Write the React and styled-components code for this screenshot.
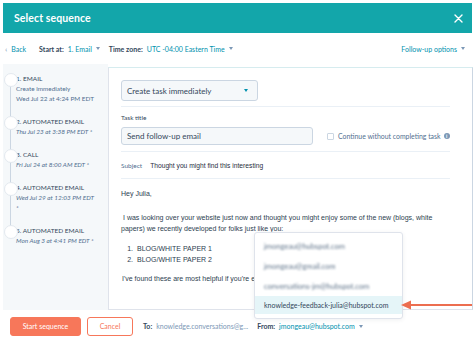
import React from 'react';
import styled, { createGlobalStyle } from 'styled-components';

const UI = `"Lato", "Noto Sans", sans-serif`;
const MAIL = `"Liberation Sans", Arial, sans-serif`;

const Global = createGlobalStyle`
  html, body { margin: 0; padding: 0; background: #fff; }
  #root { width: 474px; height: 343px; overflow: hidden; }
  * { box-sizing: border-box; }
`;

const Frame = styled.div`
  position: relative;
  width: 474px;
  height: 343px;
  padding: 3px 2px 0 3px;
  display: flex;
  flex-direction: column;
  font-family: ${UI};
  color: #33475b;
`;

const Header = styled.div`
  flex: 0 0 30px;
  background: #13a6aa;
  display: flex;
  align-items: center;
  justify-content: space-between;
  padding: 0 9px 0 11px;
`;

const Title = styled.div`
  color: #fff;
  font-size: 10.5px;
  font-weight: 700;
  letter-spacing: 0.1px;
`;

const Toolbar = styled.div`
  flex: 0 0 31px;
  display: flex;
  align-items: center;
  padding: 0 7px 0 2px;
  font-size: 7px;
  white-space: nowrap;
`;

const ToolGroup = styled.div`
  display: flex;
  align-items: center;
  margin-left: ${(p) => p.$ml || 0}px;
`;

const Label = styled.span`
  font-weight: 700;
  color: #33475b;
  margin-right: 4px;
`;

const Link = styled.span`
  color: #0091ae;
`;

const Chevron = styled.span`
  color: #7c98b6;
  margin-right: 4px;
  font-size: 8px;
`;

const Caret = styled.span`
  display: inline-block;
  width: 0;
  height: 0;
  border-left: 2.5px solid transparent;
  border-right: 2.5px solid transparent;
  border-top: 3px solid ${(p) => p.$color || '#7c98b6'};
  margin-left: ${(p) => p.$ml ?? 4}px;
`;

const Spacer = styled.div`
  flex: 1;
`;

const Main = styled.div`
  flex: 0 0 246px;
  display: flex;
`;

const Sidebar = styled.div`
  flex: 0 0 105px;
  background: #f5f8fa;
  padding: 10px 0 0 13px;
`;

const StepList = styled.div`
  position: relative;
  display: flex;
  flex-direction: column;
  gap: 13px;
  &::before {
    content: '';
    position: absolute;
    left: -6.5px;
    top: 5px;
    bottom: 15px;
    width: 1px;
    background: #cbd6e2;
  }
`;

const Step = styled.div`
  position: relative;
  line-height: 10px;
  font-size: 6.4px;
  &::before {
    content: '';
    position: absolute;
    left: -12.5px;
    top: -1px;
    width: 12px;
    height: 12px;
    border-radius: 50%;
    background: #fff;
    border: 1px solid #e3e9ef;
  }
`;

const StepTitle = styled.div`
  color: #33475b;
  font-size: 6.5px;
  text-transform: uppercase;
`;

const StepSub = styled.div`
  color: #516f90;
  font-style: ${(p) => (p.$italic ? 'italic' : 'normal')};
  white-space: nowrap;
`;

const Panel = styled.div`
  flex: 1;
  margin: 3px 6px 0 0;
  border: 1px solid #dfe3eb;
  border-top-color: #d6ecef;
  border-right-color: #cbd6e2;
  padding: 12px 22px 0 12px;
  display: flex;
  flex-direction: column;
`;

const SelectBox = styled.div`
  width: 137px;
  height: 21px;
  background: #f5f8fa;
  border: 1px solid #cbd6e2;
  border-radius: 3px;
  display: flex;
  align-items: center;
  justify-content: space-between;
  padding: 0 9px 0 5px;
  font-size: 8px;
  color: #33475b;
`;

const Divider = styled.div`
  height: 1px;
  background: #eaf0f6;
  margin-top: ${(p) => p.$mt || 0}px;
`;

const FieldLabel = styled.div`
  font-size: 6.5px;
  line-height: 8px;
  margin-top: 7px;
  color: #33475b;
`;

const FieldRow = styled.div`
  display: flex;
  align-items: center;
  margin-top: 5px;
`;

const Input = styled.div`
  width: 192px;
  height: 18px;
  background: #f5f8fa;
  border: 1px solid #cbd6e2;
  border-radius: 3px;
  display: flex;
  align-items: center;
  padding-left: 5px;
  font-size: 8px;
  color: #33475b;
`;

const Check = styled.span`
  width: 7px;
  height: 7px;
  border: 1px solid #cbd6e2;
  border-radius: 1px;
  background: #fff;
  margin-left: 14px;
  flex: 0 0 auto;
`;

const CheckText = styled.span`
  font-size: 6.9px;
  color: #516f90;
  margin-left: 4px;
  white-space: nowrap;
`;

const Info = styled.span`
  display: inline-flex;
  align-items: center;
  justify-content: center;
  width: 6px;
  height: 6px;
  border-radius: 50%;
  background: #7c98b6;
  color: #fff;
  font-size: 4.5px;
  font-weight: 700;
  margin-left: 3px;
  font-family: ${MAIL};
`;

const SubjectRow = styled.div`
  height: 26px;
  display: flex;
  align-items: center;
`;

const SubjectLabel = styled.span`
  font-size: 6.5px;
  color: #516f90;
`;

const SubjectValue = styled.span`
  font-family: ${MAIL};
  font-size: 6.7px;
  color: #1f2d3d;
  margin-left: 8px;
`;

const Body = styled.div`
  font-family: ${MAIL};
  font-size: 7px;
  line-height: 11px;
  color: #2d3e50;
  padding-top: 9px;
  white-space: nowrap;
`;

const Para = styled.p`
  margin: ${(p) => p.$mt || 0}px 0 0;
  padding-left: ${(p) => p.$pl || 0}px;
`;

const List = styled.ol`
  margin: 9px 0 0;
  padding-left: 14px;
  li { padding-left: 2px; }
`;

const Footer = styled.div`
  flex: 0 0 33px;
  display: flex;
  align-items: center;
  padding: 0 0 1px 7px;
  font-size: 7px;
  white-space: nowrap;
`;

const Button = styled.div`
  height: 19px;
  width: ${(p) => p.$w}px;
  display: flex;
  align-items: center;
  justify-content: center;
  border-radius: 3px;
  font-size: 7px;
  margin-left: ${(p) => p.$ml || 0}px;
  background: ${(p) => (p.$primary ? '#f7775a' : '#fff')};
  color: ${(p) => (p.$primary ? '#fff' : '#f7775a')};
  border: 1px solid #f7775a;
`;

const Muted = styled.span`
  color: #7c98b6;
`;

const Dropdown = styled.div`
  position: absolute;
  left: 254px;
  top: 232px;
  width: 149px;
  height: 87px;
  background: #fff;
  border: 1px solid #dfe3eb;
  border-radius: 3px;
  box-shadow: 0 1px 4px rgba(45, 62, 80, 0.08);
  padding-top: 3px;
  z-index: 2;
`;

const Option = styled.div`
  height: ${(p) => p.$h || 20}px;
  display: flex;
  align-items: center;
  padding-left: 9px;
  font-size: 7px;
  color: #33475b;
  background: ${(p) => (p.$active ? '#e5f5f8' : 'transparent')};
`;

const Blurred = styled.span`
  color: #5f7389;
  font-size: 7.5px;
  filter: blur(1.3px);
`;

const Arrow = styled.svg`
  position: absolute;
  left: 400px;
  top: 299px;
  z-index: 3;
`;

const CloseIcon = () => (
  <svg width="9" height="9" viewBox="0 0 9 9">
    <path d="M1 1 L8 8 M8 1 L1 8" stroke="#fff" strokeWidth="1.4" strokeLinecap="round" />
  </svg>
);

const steps = [
  { title: '1. Email', lines: ['Create immediately', 'Wed Jul 22 at 4:24 PM EDT'], italic: false },
  { title: '2. Automated email', lines: ['Thu Jul 23 at 3:38 PM EDT *'], italic: true },
  { title: '3. Call', lines: ['Fri Jul 24 at 8:00 AM EDT *'], italic: true },
  { title: '4. Automated email', lines: ['Wed Jul 29 at 12:03 PM EDT', '*'], italic: true },
  { title: '5. Automated email', lines: ['Mon Aug 3 at 4:41 PM EDT *'], italic: true },
];

export default function App() {
  return (
    <>
      <Global />
      <Frame>
        <Header>
          <Title>Select sequence</Title>
          <CloseIcon />
        </Header>
        <Toolbar>
          <ToolGroup>
            <Chevron>‹</Chevron>
            <Link>Back</Link>
          </ToolGroup>
          <ToolGroup $ml={13}>
            <Label>Start at:</Label>
            <Link>1. Email</Link>
            <Caret />
          </ToolGroup>
          <ToolGroup $ml={9}>
            <Label>Time zone:</Label>
            <Link>UTC -04:00 Eastern Time</Link>
            <Caret />
          </ToolGroup>
          <Spacer />
          <ToolGroup>
            <Link>Follow-up options</Link>
            <Caret />
          </ToolGroup>
        </Toolbar>
        <Main>
          <Sidebar>
            <StepList>
              {steps.map((s) => (
                <Step key={s.title}>
                  <StepTitle>{s.title}</StepTitle>
                  {s.lines.map((l, i) => (
                    <StepSub key={i} $italic={s.italic}>
                      {l}
                    </StepSub>
                  ))}
                </Step>
              ))}
            </StepList>
          </Sidebar>
          <Panel>
            <SelectBox>
              <span>Create task immediately</span>
              <Caret $color="#0091ae" $ml={0} />
            </SelectBox>
            <Divider $mt={5} />
            <FieldLabel>Task title</FieldLabel>
            <FieldRow>
              <Input>Send follow-up email</Input>
              <Check />
              <CheckText>Continue without completing task</CheckText>
              <Info>i</Info>
            </FieldRow>
            <Divider $mt={6} />
            <SubjectRow>
              <SubjectLabel>Subject</SubjectLabel>
              <SubjectValue>Thought you might find this interesting</SubjectValue>
            </SubjectRow>
            <Divider />
            <Body>
              <Para>Hey Julia,</Para>
              <Para $mt={13} $pl={2}>
                I was looking over your website just now and thought you might enjoy some of the new (blogs, white
              </Para>
              <Para>papers) we recently developed for folks just like you:</Para>
              <List>
                <li>BLOG/WHITE PAPER 1</li>
                <li>BLOG/WHITE PAPER 2</li>
              </List>
              <Para $mt={8} $pl={1}>I've found these are most helpful if you're evaluating new tools.</Para>
            </Body>
          </Panel>
        </Main>
        <Footer>
          <Button $primary $w={71}>Start sequence</Button>
          <Button $w={46} $ml={6}>Cancel</Button>
          <ToolGroup $ml={10}>
            <Label>To:</Label>
            <Muted>knowledge.conversations@g...</Muted>
          </ToolGroup>
          <ToolGroup $ml={9}>
            <Label>From:</Label>
            <Link>jmongeau@hubspot.com</Link>
            <Caret />
          </ToolGroup>
        </Footer>
        <Dropdown>
          <Option><Blurred>jmongeau@hubspot.com</Blurred></Option>
          <Option><Blurred>jmongeau@gmail.com</Blurred></Option>
          <Option><Blurred>conversations-jm@hubspot.com</Blurred></Option>
          <Option $active $h={18}>knowledge-feedback-julia@hubspot.com</Option>
        </Dropdown>
        <Arrow width="72" height="12" viewBox="0 0 72 12">
          <path d="M9 6 H72" stroke="#ec6e50" strokeWidth="2.2" />
          <path d="M1 6 L11 1.5 L11 10.5 Z" fill="#ec6e50" />
        </Arrow>
      </Frame>
    </>
  );
}
